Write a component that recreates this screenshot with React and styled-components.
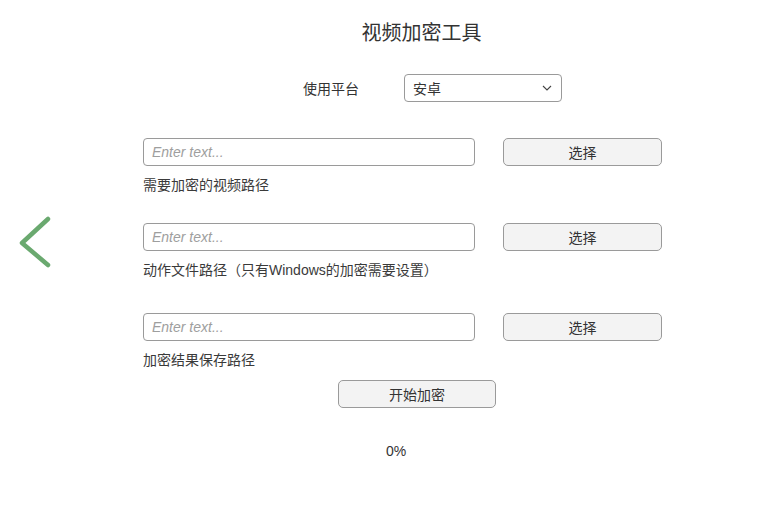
import styled, { createGlobalStyle } from 'styled-components';

const GlobalStyle = createGlobalStyle`
	html, body {
		margin: 0;
		padding: 0;
		background: #fff;
	}
	body {
		font-family: 'Liberation Sans', 'Noto Sans CJK SC', sans-serif;
		color: #333;
	}
`;

const Page = styled.div`
	display: flex;
	width: 770px;
	height: 505px;
`;

const Side = styled.div`
	width: 143px;
	display: flex;
	align-items: center;
	padding-bottom: 20px;
	box-sizing: border-box;
`;

const BackButton = styled.button`
	border: none;
	background: none;
	padding: 0;
	margin-left: 16px;
	width: 36px;
	height: 54px;
	cursor: pointer;
`;

const Main = styled.div`
	width: 519px;
	display: flex;
	flex-direction: column;
`;

const Title = styled.h1`
	margin: 18px 0 0;
	padding-left: 38px;
	text-align: center;
	font-family: 'Noto Sans CJK SC', sans-serif;
	font-weight: 400;
	font-size: 20px;
	line-height: 28px;
	color: #333;
`;

const PlatformRow = styled.div`
	display: flex;
	align-items: center;
	margin-top: 28px;
	padding-left: 160px;
	height: 28px;
`;

const PlatformLabel = styled.span`
	width: 101px;
	font-family: 'Noto Sans CJK SC', sans-serif;
	font-size: 14px;
	color: #333;
`;

const Select = styled.div`
	position: relative;
	box-sizing: border-box;
	width: 158px;
	height: 28px;
	border: 1px solid #9a9a9a;
	border-radius: 4px;
	display: flex;
	align-items: center;
	padding-left: 8px;
	font-family: 'Noto Sans CJK SC', sans-serif;
	font-size: 14px;
	color: #333;

	& svg {
		position: absolute;
		right: 9px;
		top: 10px;
	}
`;

const FieldRow = styled.div`
	display: flex;
	align-items: center;
	gap: 28px;
	margin-top: ${(p) => p.$top}px;
`;

const TextInput = styled.input`
	box-sizing: border-box;
	width: 332px;
	height: 28px;
	border: 1px solid #9a9a9a;
	border-radius: 4px;
	padding: 0 8px;
	font-family: 'Liberation Sans', sans-serif;
	font-size: 14px;
	outline: none;

	&::placeholder {
		color: #9e9e9e;
		font-style: italic;
	}
`;

const Button = styled.button`
	box-sizing: border-box;
	width: ${(p) => p.$width || 159}px;
	height: 28px;
	border: 1px solid #9a9a9a;
	border-radius: 5px;
	background: #f3f3f3;
	font-family: 'Noto Sans CJK SC', sans-serif;
	font-size: 14px;
	color: #333;
	padding: 0;
	cursor: pointer;
`;

const FieldLabel = styled.div`
	margin-top: 9px;
	font-family: 'Liberation Sans', 'Noto Sans CJK SC', sans-serif;
	font-size: 14px;
	line-height: 20px;
	color: #3a3a3a;
`;

const StartRow = styled.div`
	margin-top: 10px;
	padding-left: 195px;
`;

const Progress = styled.div`
	margin-top: 33px;
	padding-left: 243px;
	font-family: 'Liberation Sans', sans-serif;
	font-size: 14px;
	line-height: 20px;
	color: #333;
`;

const fields = [
	{ top: 36, label: '需要加密的视频路径' },
	{ top: 28, label: '动作文件路径（只有Windows的加密需要设置）' },
	{ top: 33, label: '加密结果保存路径' },
];

const App = () => {
	return (
		<>
			<GlobalStyle />
			<Page>
				<Side>
					<BackButton aria-label="back">
						<svg width="36" height="54" viewBox="0 0 36 54">
							<polyline
								points="32,3 6,27 32,49"
								fill="none"
								stroke="#6aa96f"
								strokeWidth="4.5"
								strokeLinecap="round"
								strokeLinejoin="round"
							/>
						</svg>
					</BackButton>
				</Side>
				<Main>
					<Title>视频加密工具</Title>
					<PlatformRow>
						<PlatformLabel>使用平台</PlatformLabel>
						<Select>
							安卓
							<svg width="10" height="6" viewBox="0 0 10 6">
								<polyline
									points="1,1 5,5 9,1"
									fill="none"
									stroke="#444"
									strokeWidth="1.1"
								/>
							</svg>
						</Select>
					</PlatformRow>
					{fields.map((f) => (
						<div key={f.label}>
							<FieldRow $top={f.top}>
								<TextInput placeholder="Enter text..." />
								<Button>选择</Button>
							</FieldRow>
							<FieldLabel>{f.label}</FieldLabel>
						</div>
					))}
					<StartRow>
						<Button $width={158}>开始加密</Button>
					</StartRow>
					<Progress>0%</Progress>
				</Main>
			</Page>
		</>
	);
};

export default App;
